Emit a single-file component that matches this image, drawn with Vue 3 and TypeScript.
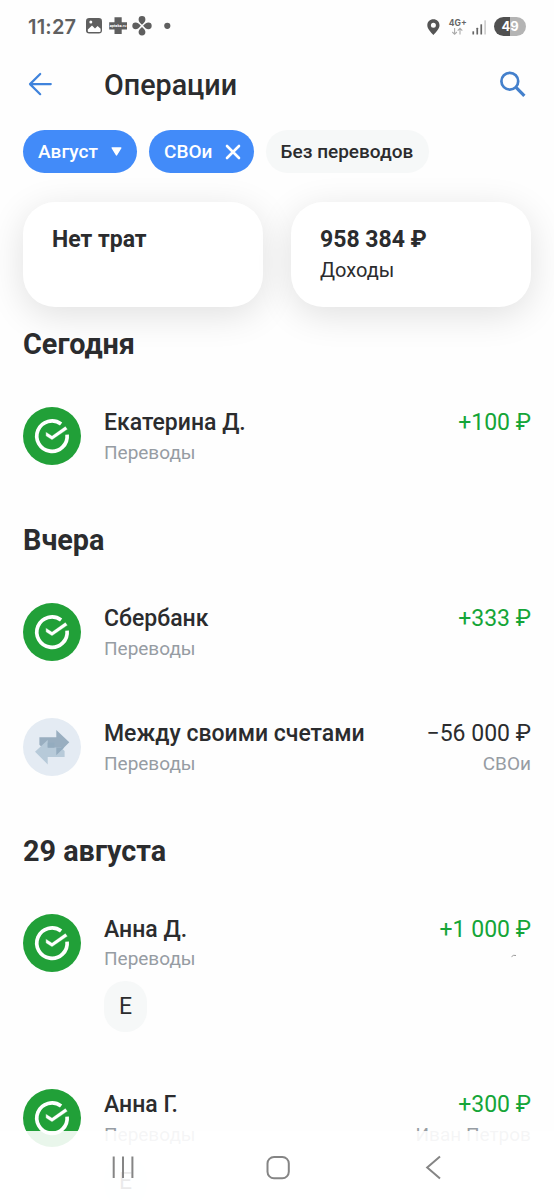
<script setup lang="ts">
interface Operation {
  id: number
  name: string
  category: string
  amount: string
  income: boolean
  icon: 'sber' | 'swap'
  account?: string
  mark?: boolean
  tag?: string
}

interface DayGroup {
  title: string
  items: Operation[]
}

const groups: DayGroup[] = [
  {
    title: 'Сегодня',
    items: [{ id: 1, name: 'Екатерина Д.', category: 'Переводы', amount: '+100 ₽', income: true, icon: 'sber' }],
  },
  {
    title: 'Вчера',
    items: [
      { id: 2, name: 'Сбербанк', category: 'Переводы', amount: '+333 ₽', income: true, icon: 'sber' },
      { id: 3, name: 'Между своими счетами', category: 'Переводы', amount: '−56 000 ₽', income: false, icon: 'swap', account: 'СВОи' },
    ],
  },
  {
    title: '29 августа',
    items: [
      { id: 4, name: 'Анна Д.', category: 'Переводы', amount: '+1 000 ₽', income: true, icon: 'sber', mark: true, tag: 'Е' },
      { id: 5, name: 'Анна Г.', category: 'Переводы', amount: '+300 ₽', income: true, icon: 'sber', account: 'Иван Петров', tag: 'Е' },
    ],
  },
]
</script>

<template>
  <div class="screen">
    <div class="status">
      <span class="clock">11:27</span>
      <svg class="st-left" width="90" height="22" viewBox="0 0 90 22">
        <rect x="1" y="3" width="16" height="15.5" rx="3.2" fill="#5f5f5f" />
        <path d="M2.8 14.6 7 10.4l3 3 2.6-2.4 3 2.8v2.2q0 .9-.9.9H3.700q-.9 0-.9-.9z" fill="#fff" />
        <circle cx="5.800" cy="7" r="1.500" fill="#fff" />
        <path d="M29.500 2.300h7.200v5h5.300v7.200h-5.300v4.500h-7.200v-4.500h-5.300V7.300h5.300z" fill="#5f5f5f" />
        <text x="33.100" y="12.300" class="badge">apteka.ru</text>
        <g fill="#5f5f5f">
          <path d="M57 9.700C54.500 7.500 53.600 6.300 53.600 4.500a3.400 3.400 0 0 1 6.800 0C60.400 6.300 59.500 7.500 57 9.700z" />
          <path d="M57 11.900c-2.500 2.200-3.400 3.400-3.400 5.200a3.400 3.400 0 0 0 6.800 0c0-1.800-.9-3-3.400-5.200z" />
          <path d="M55.900 10.800C53.700 8.300 52.500 7.400 50.700 7.400a3.400 3.400 0 0 0 0 6.800c1.800 0 3-.9 5.200-3.400z" />
          <path d="M58.100 10.800c2.200-2.500 3.400-3.400 5.200-3.400a3.400 3.400 0 0 1 0 6.800c-1.800 0-3-.9-5.200-3.400z" />
          <circle cx="82.300" cy="10.800" r="3.100" />
        </g>
      </svg>
      <span class="grow"></span>
      <svg class="st-right" width="66" height="22" viewBox="0 0 66 22">
        <path fill-rule="evenodd" d="M8.400 3.300c3.500 0 6.100 2.600 6.100 5.900 0 3.800-3.800 7-6.100 9.900-2.300-2.900-6.100-6.100-6.100-9.900 0-3.300 2.600-5.900 6.100-5.900zm0 3.500a2.500 2.500 0 1 0 0 5 2.500 2.500 0 0 0 0-5z" fill="#555" />
        <text x="23.800" y="9.700" class="net">4G+</text>
        <path d="M29.600 12v6.300m-2.300-2.300 2.300 2.300 2.300-2.300M35 18.600v-6.300m-2.300 2.300 2.300-2.300 2.300 2.300" fill="none" stroke="#aaa" stroke-width="1.100" />
        <g fill="#666">
          <rect x="47.400" y="15.200" width="1.700" height="3.300" rx=".5" />
          <rect x="51.400" y="11.800" width="1.700" height="6.700" rx=".5" />
          <rect x="55.400" y="8.200" width="1.700" height="10.300" rx=".5" />
          <rect x="59.400" y="4.300" width="1.400" height="14.200" rx=".5" fill="#c4c4c4" />
        </g>
      </svg>
      <span class="battery">49</span>
    </div>

    <header class="header">
      <svg width="24" height="24" viewBox="0 0 24 24" fill="none" stroke="#3f83dc" stroke-width="2.200" stroke-linecap="round" stroke-linejoin="round">
        <path d="M22.800 12.100H2.200M12.200 2 2 12.100l10.200 10.100" />
      </svg>
      <h1>Операции</h1>
      <svg class="search" width="27" height="27" viewBox="0 0 27 27" fill="none" stroke="#4480cc">
        <circle cx="10.800" cy="10.200" r="8.400" stroke-width="2.700" />
        <path d="m17 16.400 8.400 8.400" stroke-width="3.200" />
      </svg>
    </header>

    <div class="chips">
      <button class="chip month">
        <span>Август</span>
        <svg width="11" height="9" viewBox="0 0 11 9"><path d="M1.200.9h8.600L5.500 7.900z" fill="#fff" stroke="#fff" stroke-width="1.400" stroke-linejoin="round" /></svg>
      </button>
      <button class="chip account-chip">
        <span>СВОи</span>
        <svg width="16" height="16" viewBox="0 0 16 16"><path d="m2 2 12 12M14 2 2 14" stroke="#fff" stroke-width="2.600" stroke-linecap="round" /></svg>
      </button>
      <button class="chip muted"><span>Без переводов</span></button>
    </div>

    <div class="cards">
      <section class="card"><strong>Нет трат</strong></section>
      <section class="card"><strong>958 384 ₽</strong><span>Доходы</span></section>
    </div>

    <main>
      <section v-for="g in groups" :key="g.title" class="group">
        <h2>{{ g.title }}</h2>
        <article v-for="o in g.items" :key="o.id" class="row" :class="{ tagged: o.tag }">
          <svg v-if="o.icon === 'sber'" class="avatar" viewBox="0 0 58 58">
            <circle cx="29" cy="29" r="29" fill="#21a038" />
            <path d="M38.100 17A15.200 15.200 0 1 0 44.100 27.600" fill="none" stroke="#fff" stroke-width="3.700" />
            <path d="M22.800 24.800 29 28.700l13.400-9.500 2.200 3L29 33l-6.200-4z" fill="#fff" stroke="#21a038" stroke-width=".4" />
          </svg>
          <svg v-else class="avatar" viewBox="0 0 58 58">
            <circle cx="29" cy="29" r="29" fill="#e4ebf3" />
            <path d="M16.400 19.300h16.900v-7.300l13 12.300-13 13v-7.500H19.500l-3.100-3z" fill="#99aec0" />
            <path d="M12 33.700 24.700 21.900v7.500H38l3.600 3.600v6.100H24.700v7.300z" fill="#b7cad9" />
            <path d="M24.700 24.800v5h8.600v7.500l7.900-7.900-9.700.100v-4.700z" fill="#94acbf" />
          </svg>
          <div class="body">
            <div class="line">
              <span class="name">{{ o.name }}</span>
              <span class="amount" :class="{ income: o.income }">{{ o.amount }}</span>
            </div>
            <div class="line sub">
              <span>{{ o.category }}</span>
              <span v-if="o.account" class="account">{{ o.account }}</span>
              <svg v-if="o.mark" class="mark" width="6" height="4" viewBox="0 0 6 4"><path d="M.5 2.700Q2.500.5 5 1.500" fill="none" stroke="#999" stroke-width="1" /></svg>
            </div>
            <span v-if="o.tag" class="tag">{{ o.tag }}</span>
          </div>
        </article>
      </section>
    </main>

    <nav class="navbar">
      <svg width="554" height="69" viewBox="0 0 554 69" fill="none" stroke="#858585" stroke-width="2">
        <path d="M113.700 25.500v21.500M123 25.500v21.500M132.400 25.500v21.500" />
        <rect x="267.500" y="26" width="21.300" height="21.300" rx="6.500" />
        <path d="m440 25.500-12.800 11L440 47.500" />
      </svg>
    </nav>
  </div>
</template>

<style>
html,
body {
  margin: 0;
  overflow: hidden;
  background: #fefefe;
}
</style>

<style scoped>
.screen {
  position: relative;
  width: 554px;
  height: 1200px;
  overflow: hidden;
  background: #fefefe;
  color: #2b2c2e;
  font-family: Roboto, 'Noto Sans', sans-serif;
}
.status {
  display: flex;
  align-items: center;
  height: 53px;
  padding: 0 28px;
  box-sizing: border-box;
}
.clock {
  width: 57px;
  font-family: Inter, Roboto, sans-serif;
  font-size: 20px;
  font-weight: 600;
  letter-spacing: 0.200px;
  color: #606060;
}
.st-left {
  margin-top: -1px;
}
.badge {
  font: 700 3.600px Inter, sans-serif;
  fill: #fff;
  text-anchor: middle;
}
.grow {
  flex: 1;
}
.st-right {
  margin-right: 3px;
}
.net {
  font: 700 8.500px Inter, sans-serif;
  fill: #666;
}
.battery {
  width: 32px;
  height: 19px;
  border-radius: 10px;
  background: linear-gradient(90deg, #505050 49%, #b4b4b4 49%);
  color: #fff;
  font: 700 13px/19px Inter, sans-serif;
  text-align: center;
}
.header {
  display: flex;
  align-items: center;
  height: 62px;
  padding: 0 28px;
}
h1 {
  flex: 1;
  margin: 1px 0 0 52px;
  font-size: 28.700px;
  font-weight: 500;
  line-height: 36px;
}
.chips {
  display: flex;
  gap: 12px;
  margin-top: 15px;
  padding-left: 23px;
}
.chip {
  display: flex;
  align-items: center;
  height: 43px;
  padding: 0 15px;
  box-sizing: border-box;
  border: 0;
  border-radius: 22px;
  background: #428bf9;
  color: #fff;
  font: 500 19px/24px Roboto, sans-serif;
  white-space: nowrap;
}
.month {
  width: 114px;
  justify-content: space-between;
}
.account-chip {
  width: 104.600px;
  padding-right: 13px;
  justify-content: space-between;
}
.muted {
  width: 163px;
  background: #f6f8f8;
  color: #2b2c2e;
}
.cards {
  display: grid;
  grid-template-columns: 240px 240px;
  gap: 28px;
  margin: 29px 0 0 23px;
}
.card {
  display: flex;
  flex-direction: column;
  height: 105px;
  padding: 23px 29px 0;
  box-sizing: border-box;
  border-radius: 32px;
  background: #fff;
  box-shadow: 0 8px 36px rgba(0, 0, 0, 0.120);
}
.card strong {
  font-size: 23px;
  font-weight: 700;
  line-height: 30px;
}
.card span {
  font-size: 20px;
  line-height: 31px;
}
.group h2 {
  display: flex;
  align-items: flex-end;
  height: 80.300px;
  margin: 0;
  padding: 0 23px 17px;
  box-sizing: border-box;
  font-size: 28.800px;
  font-weight: 700;
  line-height: 34px;
}
.group:first-child h2 {
  height: 71.200px;
}
.row {
  display: flex;
  gap: 23px;
  height: 115.400px;
  padding: 29px 23px 0;
  box-sizing: border-box;
}
.tagged {
  height: 175.300px;
}
.avatar {
  flex: none;
  width: 58px;
  height: 58px;
}
.body {
  flex: 1;
}
.line {
  display: flex;
  justify-content: space-between;
  align-items: center;
  height: 31px;
  font-size: 23px;
  white-space: nowrap;
}
.name {
  font-weight: 500;
}
.income {
  color: #15a538;
}
.sub {
  height: 29px;
  font-size: 19px;
  color: #969ca3;
}
.tagged .line {
  height: 30.500px;
}
.tagged .sub {
  height: 28.500px;
}
.mark {
  margin: -5px 14px 0 0;
}
.tag {
  display: flex;
  align-items: center;
  justify-content: center;
  width: 43px;
  height: 51px;
  margin-top: 8px;
  border-radius: 21px;
  background: #f6f8f8;
  font-size: 23px;
}
.navbar {
  position: absolute;
  left: 0;
  bottom: 0;
  height: 69px;
  background: rgba(255, 255, 255, 0.900);
}
</style>
